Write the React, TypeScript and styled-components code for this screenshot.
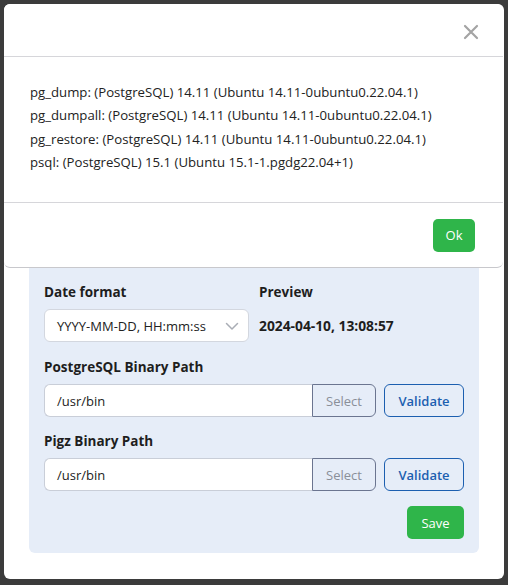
import React from "react";
import styled, { createGlobalStyle } from "styled-components";

const Global = createGlobalStyle`
  html, body { margin: 0; padding: 0; background: #3b3b3b; }
  body { font-family: "Open Sans", "Liberation Sans", sans-serif; color: #222; }
  * { box-sizing: border-box; }
`;

const Stage = styled.div`
  position: relative;
  width: 508px;
  height: 585px;
  padding: 4px 4px 6px 4px;
`;

const Page = styled.div`
  background: #fff;
  border-radius: 6px;
  height: 575px;
  padding: 249px 25px 25px;
  display: flex;
  flex-direction: column;
`;

const Panel = styled.div`
  background: #e6edf8;
  border-radius: 6px;
  padding: 30px 15px 14px;
  display: flex;
  flex-direction: column;
`;

const TwoCol = styled.div`
  display: grid;
  grid-template-columns: 205px 205px;
  column-gap: 10px;
`;

const Field = styled.div`
  display: flex;
  flex-direction: column;
`;

const Label = styled.div`
  font-size: 13.5px;
  font-weight: 700;
  line-height: 18px;
  height: 18px;
  margin-bottom: 8px;
  color: #1e1e1e;
`;

const SelectBox = styled.div`
  height: 33px;
  background: #fff;
  border: 1px solid #d3d7df;
  border-radius: 6px;
  display: flex;
  align-items: center;
  justify-content: space-between;
  padding: 0 8px 0 12px;
  font-size: 13px;
  color: #222;
`;

const PreviewValue = styled.div`
  height: 33px;
  display: flex;
  align-items: center;
  font-size: 13.8px;
  font-weight: 700;
  color: #1e1e1e;
`;

const Section = styled.div<{ $gap: number }>`
  margin-top: ${(p) => p.$gap}px;
  display: flex;
  flex-direction: column;
`;

const InputRow = styled.div`
  display: flex;
  align-items: stretch;
  height: 33px;
`;

const InputGroup = styled.div`
  display: flex;
  width: 332px;
`;

const TextInput = styled.div`
  flex: 1;
  background: #fff;
  border: 1px solid #c9ced8;
  border-right: none;
  border-radius: 6px 0 0 6px;
  display: flex;
  align-items: center;
  padding: 0 12px;
  font-size: 13px;
  color: #222;
`;

const AddonButton = styled.div`
  width: 64px;
  border: 1px solid #6b7590;
  border-radius: 0 6px 6px 0;
  background: #e6edf8;
  display: flex;
  align-items: center;
  justify-content: center;
  font-size: 13px;
  color: #8a8f99;
`;

const OutlineButton = styled.div`
  margin-left: 8px;
  width: 80px;
  border: 1px solid #1c5fb0;
  border-radius: 6px;
  display: flex;
  align-items: center;
  justify-content: center;
  font-size: 13px;
  font-weight: 600;
  color: #1c5fb0;
`;

const Actions = styled.div`
  display: flex;
  justify-content: flex-end;
  margin-top: 15px;
`;

const GreenButton = styled.div<{ $w: number }>`
  width: ${(p) => p.$w}px;
  height: 33px;
  background: #2fb54a;
  border-radius: 5px;
  display: flex;
  align-items: center;
  justify-content: center;
  color: #fff;
  font-size: 13px;
  font-weight: 500;
`;

const Modal = styled.div`
  position: absolute;
  top: 4px;
  left: 4px;
  width: 499px;
  height: 264px;
  background: #fff;
  border-radius: 6px;
  border-bottom: 1px solid #c8c8cc;
  display: flex;
  flex-direction: column;
`;

const ModalHeader = styled.div`
  height: 53px;
  border-bottom: 1px solid #d6d6da;
  display: flex;
  align-items: center;
  justify-content: flex-end;
  padding: 3px 24px 0 0;
`;

const ModalBody = styled.div`
  padding: 24px 26px 28px;
  border-bottom: 1px solid #d6d6da;
`;

const Line = styled.div`
  font-size: 13.2px;
  line-height: 23.3px;
  color: #222;
`;

const ModalFooter = styled.div`
  flex: 1;
  display: flex;
  align-items: center;
  justify-content: flex-end;
  padding-right: 28px;
`;

const Chevron = () => (
  <svg width="16" height="16" viewBox="0 0 16 16" fill="none">
    <path d="M2.5 5.5 L8 11 L13.5 5.5" stroke="#a9adb5" strokeWidth="1.5" strokeLinecap="round" strokeLinejoin="round" />
  </svg>
);

const CloseIcon = () => (
  <svg width="16" height="16" viewBox="0 0 16 16" fill="none">
    <path d="M2 2 L14 14 M14 2 L2 14" stroke="#a4a4a4" strokeWidth="2.2" strokeLinecap="round" />
  </svg>
);

const lines = [
  "pg_dump: (PostgreSQL) 14.11 (Ubuntu 14.11-0ubuntu0.22.04.1)",
  "pg_dumpall: (PostgreSQL) 14.11 (Ubuntu 14.11-0ubuntu0.22.04.1)",
  "pg_restore: (PostgreSQL) 14.11 (Ubuntu 14.11-0ubuntu0.22.04.1)",
  "psql: (PostgreSQL) 15.1 (Ubuntu 15.1-1.pgdg22.04+1)",
];

const PathField = ({ label, gap }: { label: string; gap: number }) => (
  <Section $gap={gap}>
    <Label>{label}</Label>
    <InputRow>
      <InputGroup>
        <TextInput>/usr/bin</TextInput>
        <AddonButton>Select</AddonButton>
      </InputGroup>
      <OutlineButton>Validate</OutlineButton>
    </InputRow>
  </Section>
);

export default function App() {
  return (
    <Stage>
      <Global />
      <Page>
        <Panel>
          <TwoCol>
            <Field>
              <Label>Date format</Label>
              <SelectBox>
                <span>YYYY-MM-DD, HH:mm:ss</span>
                <Chevron />
              </SelectBox>
            </Field>
            <Field>
              <Label>Preview</Label>
              <PreviewValue>2024-04-10, 13:08:57</PreviewValue>
            </Field>
          </TwoCol>
          <PathField label="PostgreSQL Binary Path" gap={16} />
          <PathField label="Pigz Binary Path" gap={15} />
          <Actions>
            <GreenButton $w={57}>Save</GreenButton>
          </Actions>
        </Panel>
      </Page>
      <Modal>
        <ModalHeader>
          <CloseIcon />
        </ModalHeader>
        <ModalBody>
          {lines.map((l) => (
            <Line key={l}>{l}</Line>
          ))}
        </ModalBody>
        <ModalFooter>
          <GreenButton $w={42}>Ok</GreenButton>
        </ModalFooter>
      </Modal>
    </Stage>
  );
}
